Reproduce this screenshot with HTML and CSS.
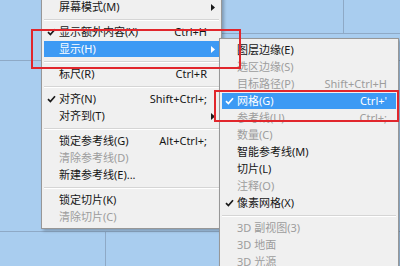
FILE: index.html
```html
<!DOCTYPE html>
<html lang="zh-CN">
<head>
<meta charset="utf-8">
<title>Menu</title>
<link rel="stylesheet" href="styles.css">
</head>
<body>
<div class="canvas">
  <div class="menu main">
    <div class="item"><span class="chk"></span><span class="lbl">屏幕模式(M)</span><span class="key"></span><span class="arr"><svg width="4" height="7" viewBox="0 0 4 7"><path d="M0 0L4 3.5L0 7Z"/></svg></span></div>
    <div class="sep"></div>
    <div class="item"><span class="chk"><svg width="9" height="8" viewBox="0 0 9 8"><path d="M1 4.2L3.4 6.6L8 1.2"/></svg></span><span class="lbl">显示额外内容(X)</span><span class="key">Ctrl+H</span><span class="arr"></span></div>
    <div class="item hl"><span class="chk"></span><span class="lbl">显示(H)</span><span class="key"></span><span class="arr"><svg width="4" height="7" viewBox="0 0 4 7"><path d="M0 0L4 3.5L0 7Z"/></svg></span></div>
    <div class="sep"></div>
    <div class="item"><span class="chk"></span><span class="lbl">标尺(R)</span><span class="key">Ctrl+R</span><span class="arr"></span></div>
    <div class="sep"></div>
    <div class="item"><span class="chk"><svg width="9" height="8" viewBox="0 0 9 8"><path d="M1 4.2L3.4 6.6L8 1.2"/></svg></span><span class="lbl">对齐(N)</span><span class="key">Shift+Ctrl+;</span><span class="arr"></span></div>
    <div class="item"><span class="chk"></span><span class="lbl">对齐到(T)</span><span class="key"></span><span class="arr"><svg width="4" height="7" viewBox="0 0 4 7"><path d="M0 0L4 3.5L0 7Z"/></svg></span></div>
    <div class="sep"></div>
    <div class="item"><span class="chk"></span><span class="lbl">锁定参考线(G)</span><span class="key">Alt+Ctrl+;</span><span class="arr"></span></div>
    <div class="item off"><span class="chk"></span><span class="lbl">清除参考线(D)</span><span class="key"></span><span class="arr"></span></div>
    <div class="item"><span class="chk"></span><span class="lbl">新建参考线(E)...</span><span class="key"></span><span class="arr"></span></div>
    <div class="sep"></div>
    <div class="item"><span class="chk"></span><span class="lbl">锁定切片(K)</span><span class="key"></span><span class="arr"></span></div>
    <div class="item off"><span class="chk"></span><span class="lbl">清除切片(C)</span><span class="key"></span><span class="arr"></span></div>
  </div>

  <div class="menu sub">
    <div class="item"><span class="chk"></span><span class="lbl">图层边缘(E)</span><span class="key"></span><span class="arr"></span></div>
    <div class="item off"><span class="chk"></span><span class="lbl">选区边缘(S)</span><span class="key"></span><span class="arr"></span></div>
    <div class="item off"><span class="chk"></span><span class="lbl">目标路径(P)</span><span class="key">Shift+Ctrl+H</span><span class="arr"></span></div>
    <div class="item hl"><span class="chk"><svg width="9" height="8" viewBox="0 0 9 8"><path d="M1 4.2L3.4 6.6L8 1.2"/></svg></span><span class="lbl">网格(G)</span><span class="key">Ctrl+'</span><span class="arr"></span></div>
    <div class="item off"><span class="chk"></span><span class="lbl">参考线(U)</span><span class="key">Ctrl+;</span><span class="arr"></span></div>
    <div class="item off"><span class="chk"></span><span class="lbl">数量(C)</span><span class="key"></span><span class="arr"></span></div>
    <div class="item"><span class="chk"></span><span class="lbl">智能参考线(M)</span><span class="key"></span><span class="arr"></span></div>
    <div class="item"><span class="chk"></span><span class="lbl">切片(L)</span><span class="key"></span><span class="arr"></span></div>
    <div class="item off"><span class="chk"></span><span class="lbl">注释(O)</span><span class="key"></span><span class="arr"></span></div>
    <div class="item"><span class="chk"><svg width="9" height="8" viewBox="0 0 9 8"><path d="M1 4.2L3.4 6.6L8 1.2"/></svg></span><span class="lbl">像素网格(X)</span><span class="key"></span><span class="arr"></span></div>
    <div class="sep"></div>
    <div class="item off"><span class="chk"></span><span class="lbl">3D 副视图(3)</span><span class="key"></span><span class="arr"></span></div>
    <div class="item off"><span class="chk"></span><span class="lbl">3D 地面</span><span class="key"></span><span class="arr"></span></div>
    <div class="item off"><span class="chk"></span><span class="lbl">3D 光源</span><span class="key"></span><span class="arr"></span></div>
  </div>

  <div class="mark mark-a"></div>
  <div class="mark mark-b"></div>
</div>
</body>
</html>
```

FILE: styles.css
```css
html, body {
  margin: 0;
  padding: 0;
}

body {
  width: 400px;
  height: 266px;
  overflow: hidden;
  font-family: "Noto Sans", "Noto Sans CJK SC", sans-serif;
  font-size: 11px;
}

.canvas {
  position: relative;
  width: 400px;
  height: 266px;
  overflow: hidden;
  background:
    linear-gradient(#8ea9c6, #8ea9c6) 0 60px / 100% 1px no-repeat,
    linear-gradient(#8ea9c6, #8ea9c6) 220px 33px / 180px 1px no-repeat,
    linear-gradient(#8ea9c6, #8ea9c6) 0 231px / 100% 1px no-repeat,
    linear-gradient(#8ea9c6, #8ea9c6) 343px 0 / 1px 33px no-repeat,
    linear-gradient(#8ea9c6, #8ea9c6) 105px 231px / 1px 35px no-repeat,
    #a9cdef;
}

.menu {
  position: absolute;
  box-sizing: border-box;
  background: #f0f0f0;
  border: 1px solid #979797;
  padding: 2px;
  box-shadow: 2px 2px 3px rgba(0, 0, 0, 0.25);
  color: #161616;
}

.main {
  left: 41px;
  top: -5px;
  width: 181px;
}

.sub {
  left: 219px;
  top: 38px;
  width: 180px;
}

.item {
  display: grid;
  grid-template-columns: 15px 1fr auto 12px;
  align-items: center;
  height: 16px;
  margin: 1px 0;
  line-height: 16px;
  white-space: nowrap;
}

.sub .item {
  grid-template-columns: 15px 1fr auto 9px;
}

.chk {
  display: flex;
  align-items: center;
  justify-content: center;
  height: 16px;
}

.chk svg path {
  fill: none;
  stroke: #1a1a1a;
  stroke-width: 1.7;
}

.arr {
  display: flex;
  align-items: center;
  justify-content: center;
  height: 16px;
}

.arr svg path {
  fill: #1a1a1a;
}

.off {
  color: #9d9d9d;
}

.hl {
  background: #3d9af4;
  color: #ffffff;
}

.hl .chk svg path {
  stroke: #ffffff;
}

.hl .arr svg path {
  fill: #ffffff;
}

.sep {
  height: 7px;
  box-sizing: border-box;
  padding-top: 3px;
}

.sep::before {
  content: "";
  display: block;
  height: 1px;
  background: #d5d5d5;
  border-bottom: 1px solid #ffffff;
}

.mark {
  position: absolute;
  box-sizing: border-box;
  border: 2px solid #e1262c;
}

.mark-a {
  left: 31px;
  top: 29px;
  width: 210px;
  height: 40px;
}

.mark-b {
  left: 214px;
  top: 90px;
  width: 185px;
  height: 32px;
}
```
